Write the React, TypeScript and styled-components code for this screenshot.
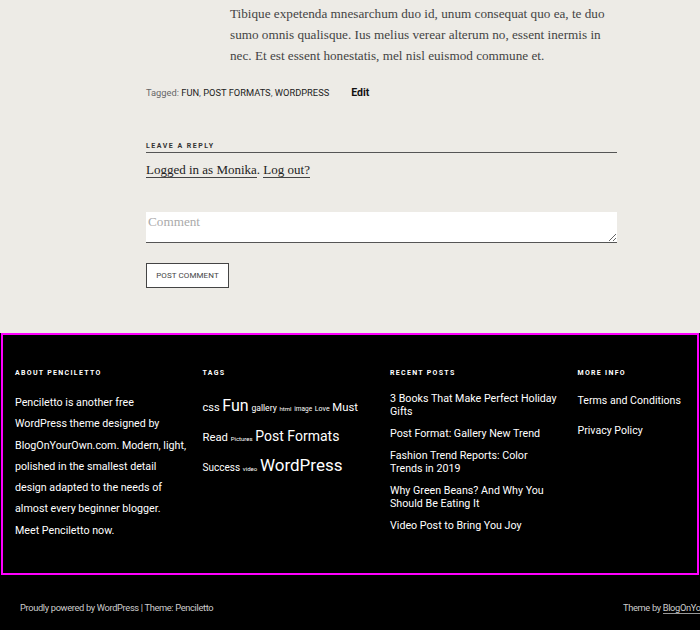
import React from "react";
import styled, { createGlobalStyle } from "styled-components";

const GlobalStyle = createGlobalStyle`
  body {
    margin: 0;
    background: #edebe6;
    font-family: "Roboto", "Liberation Sans", sans-serif;
  }
`;

const Page = styled.div`
  width: 700px;
  overflow: hidden;
`;

const Article = styled.main`
  width: 471px;
  margin-left: 146px;
  padding-top: 3px;
  padding-bottom: 45px;
`;

const Body = styled.p`
  margin: 0 0 0 84px;
  font-family: "Liberation Serif", "DejaVu Serif", serif;
  font-size: 13.2px;
  line-height: 21px;
  color: #444;
`;

const Meta = styled.div`
  display: flex;
  align-items: baseline;
  margin-top: 20px;
  font-size: 9.3px;
  color: #666;
`;

const TagLink = styled.a`
  color: #222;
  text-decoration: none;
`;

const EditLink = styled.a`
  margin-left: 22px;
  font-size: 10.5px;
  font-weight: 700;
  color: #111;
  text-decoration: none;
`;

const ReplyTitle = styled.h3`
  margin: 43px 0 0;
  padding-bottom: 1px;
  border-bottom: 1px solid #555;
  font-size: 7px;
  font-weight: 700;
  letter-spacing: 1.5px;
  color: #333;
  line-height: 9px;
`;

const LoggedIn = styled.p`
  margin: 8px 0 0;
  font-family: "Liberation Serif", "DejaVu Serif", serif;
  font-size: 13px;
  line-height: 18px;
  color: #222;
`;

const SerifLink = styled.a`
  color: #222;
  text-decoration: none;
  border-bottom: 1px solid #444;
`;

const CommentBox = styled.textarea`
  display: block;
  box-sizing: border-box;
  width: 471px;
  height: 31px;
  margin-top: 33px;
  padding: 2px 2px;
  border: none;
  border-bottom: 1px solid #555;
  background: #fff;
  font-family: "Liberation Serif", "DejaVu Serif", serif;
  font-size: 13.2px;
  color: #222;
  resize: vertical;
  &::placeholder {
    color: #aaa;
  }
`;

const SubmitButton = styled.button`
  display: block;
  margin-top: 20px;
  width: 83px;
  height: 25px;
  padding: 0;
  border: 1px solid #444;
  background: #fff;
  font-family: "Roboto", sans-serif;
  font-size: 8px;
  color: #444;
  letter-spacing: 0.1px;
`;

const Footer = styled.footer`
  background: #000;
  color: #fff;
`;

const Widgets = styled.div`
  display: grid;
  grid-template-columns: repeat(4, 172.5px);
  column-gap: 15px;
  height: 242px;
  box-sizing: border-box;
  padding: 35px 0 0 14px;
  margin: 0 1px;
  outline: 2px solid #ff00ff;
  outline-offset: -2px;
`;

const Widget = styled.section``;

const WidgetTitle = styled.h4`
  margin: 0 0 14px;
  font-size: 7px;
  font-weight: 700;
  letter-spacing: 1.3px;
  line-height: 10px;
`;

const AboutText = styled.p`
  margin: 0;
  width: 171px;
  font-size: 10.7px;
  line-height: 21.3px;
`;

const TagCloud = styled.div`
  font-size: 11px;
  line-height: 27px;
  margin-top: 2px;
`;

const Tag = styled.a<{ size: number }>`
  color: #fff;
  text-decoration: none;
  font-size: ${({ size }) => size}px;
`;

const PostList = styled.ul`
  list-style: none;
  margin: 0;
  padding: 0;
  display: flex;
  flex-direction: column;
  gap: 9px;
  width: 172px;
`;

const PostItem = styled.li`
  font-size: 10.7px;
  line-height: 13px;
`;

const InfoList = styled.ul`
  list-style: none;
  margin: 4px 0 0;
  padding: 0;
  display: flex;
  flex-direction: column;
  gap: 13px;
`;

const InfoItem = styled.li`
  font-size: 10.6px;
  line-height: 17px;
`;

const BottomBar = styled.div`
  display: flex;
  align-items: flex-start;
  height: 55px;
  box-sizing: border-box;
  padding: 27px 0 0 20px;
  font-size: 9.3px;
  letter-spacing: -0.35px;
  color: #ccc;
  white-space: nowrap;
`;

const PoweredBy = styled.span`
  flex: 0 0 603px;
`;

const Credit = styled.span`
  a {
    color: #ccc;
    text-decoration: none;
    border-bottom: 1px solid #999;
  }
`;

const tags = [
  { label: "css", size: 11 },
  { label: "Fun", size: 16 },
  { label: "gallery", size: 8.6 },
  { label: "html", size: 6 },
  { label: "image", size: 6.5 },
  { label: "Love", size: 7 },
  { label: "Must Read", size: 11.3 },
  { label: "Pictures", size: 6 },
  { label: "Post Formats", size: 14 },
  { label: "Success", size: 10 },
  { label: "video", size: 6 },
  { label: "WordPress", size: 17 },
];

const posts = [
  "3 Books That Make Perfect Holiday Gifts",
  "Post Format: Gallery New Trend",
  "Fashion Trend Reports: Color Trends in 2019",
  "Why Green Beans? And Why You Should Be Eating It",
  "Video Post to Bring You Joy",
];

const App = () => {
  return (
    <Page>
      <GlobalStyle />
      <Article>
        <Body>
          Tibique expetenda mnesarchum duo id, unum consequat quo ea, te duo
          sumo omnis qualisque. Ius melius verear alterum no, essent inermis in
          nec. Et est essent honestatis, mel nisl euismod commune et.
        </Body>
        <Meta>
          <span>
            Tagged: <TagLink href="#">FUN</TagLink>,{" "}
            <TagLink href="#">POST FORMATS</TagLink>,{" "}
            <TagLink href="#">WORDPRESS</TagLink>
          </span>
          <EditLink href="#">Edit</EditLink>
        </Meta>
        <ReplyTitle>LEAVE A REPLY</ReplyTitle>
        <LoggedIn>
          <SerifLink href="#">Logged in as Monika</SerifLink>.{" "}
          <SerifLink href="#">Log out?</SerifLink>
        </LoggedIn>
        <CommentBox placeholder="Comment" />
        <SubmitButton>POST COMMENT</SubmitButton>
      </Article>
      <Footer>
        <Widgets>
          <Widget>
            <WidgetTitle>ABOUT PENCILETTO</WidgetTitle>
            <AboutText>
              Penciletto is another free WordPress theme designed by
              BlogOnYourOwn.com. Modern, light, polished in the smallest detail
              design adapted to the needs of almost every beginner blogger.
              Meet Penciletto now.
            </AboutText>
          </Widget>
          <Widget>
            <WidgetTitle>TAGS</WidgetTitle>
            <TagCloud>
              {tags.map((t) => (
                <React.Fragment key={t.label}>
                  <Tag href="#" size={t.size}>
                    {t.label}
                  </Tag>{" "}
                </React.Fragment>
              ))}
            </TagCloud>
          </Widget>
          <Widget>
            <WidgetTitle>RECENT POSTS</WidgetTitle>
            <PostList>
              {posts.map((p) => (
                <PostItem key={p}>{p}</PostItem>
              ))}
            </PostList>
          </Widget>
          <Widget>
            <WidgetTitle>MORE INFO</WidgetTitle>
            <InfoList>
              <InfoItem>Terms and Conditions</InfoItem>
              <InfoItem>Privacy Policy</InfoItem>
            </InfoList>
          </Widget>
        </Widgets>
        <BottomBar>
          <PoweredBy>Proudly powered by WordPress | Theme: Penciletto</PoweredBy>
          <Credit>
            Theme by <a href="#">BlogOnYourOwn</a>
          </Credit>
        </BottomBar>
      </Footer>
    </Page>
  );
};

export default App;
